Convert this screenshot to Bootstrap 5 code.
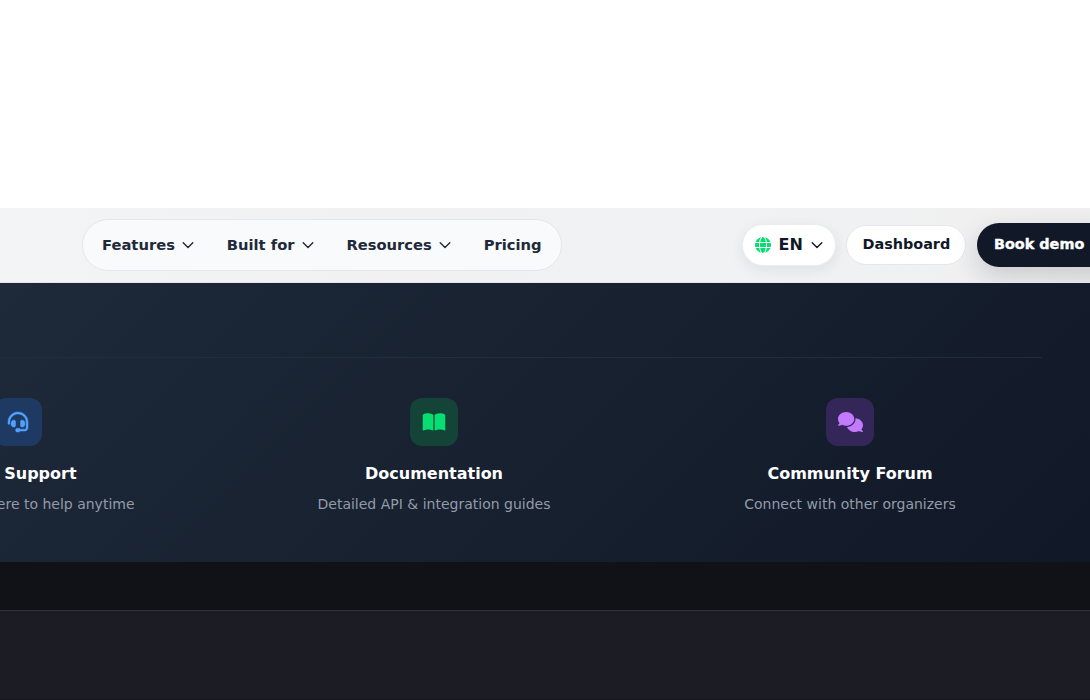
<!DOCTYPE html>
<html lang="en">
<head>
<meta charset="utf-8">
<meta name="viewport" content="width=device-width, initial-scale=1">
<title>Support resources</title>
<link href="https://cdn.jsdelivr.net/npm/bootstrap@5.3.0/dist/css/bootstrap.min.css" rel="stylesheet">
<style>
body{font-family:"DejaVu Sans",sans-serif;background:#fff;height:700px;overflow:hidden}
svg{display:block;flex:none}
.top-space{height:208px}
.site-bar{height:75px;background:linear-gradient(90deg,#f3f4f5,#f1f1f2 35%,#f1f2f4 65%,#efefef);border-bottom:1px solid #e5e7eb;padding-left:82px;overflow:hidden}
.menu-pill{width:480px;height:52px;background:#f9fafc;border:1px solid #e4e6ea;padding:0 19px;gap:32.6px}
.menu-pill a{font-size:14.72px;line-height:22px;font-weight:700;color:#1e2939;gap:7.3px}
.actions{margin-left:180px}
.lang{width:94px;height:42px;background:#fff;border:1px solid #ebedf0;padding:0 11.5px;gap:8px;color:#101828;font-weight:700;font-size:16px;box-shadow:0 4px 14px rgba(16,24,40,.08)}
.dash{width:120px;height:40px;background:#fff;border:1px solid #e5e7eb;margin-left:10px;padding:0 0 2px 15.5px;line-height:22px;color:#101828;font-weight:700;font-size:14.4px}
.demo{width:150px;height:44px;background:#111827;margin-left:11px;padding:0 0 2px 17px;line-height:22px;color:#fff;font-weight:700;font-size:14.4px;-webkit-text-stroke:.4px #fff;box-shadow:0 10px 26px rgba(16,24,40,.17)}
.help{height:279px;background:linear-gradient(135deg,#1e2939,#172130 50%,#111827);overflow:hidden}
.help-inner{width:1216px;margin-left:-174px;margin-top:74px;border-top:1px solid #222d3c;padding-top:40px;display:grid;grid-template-columns:repeat(3,384px);gap:32px}
.tile{width:48px;height:48px;border-radius:12px}
.tile-blue{background:#1f3a62;color:#51a2ff;padding-bottom:1px}
.tile-green{background:#144338;color:#05df72}
.tile-purple{background:#35265a;color:#c27aff}
.help h3{font-size:16px;line-height:24px;font-weight:700;color:#fff;margin:16px 0 8px}
.help p{font-size:14px;line-height:20px;color:#939ba9;margin:0}
.band{height:48px;background:#111118}
.base{height:90px;background:#1c1c24;border-top:1px solid #303037;border-bottom:1px solid #181120}
</style>
</head>
<body>
<div class="top-space"></div>
<header class="site-bar d-flex align-items-center">
  <nav class="menu-pill rounded-pill d-flex align-items-center flex-shrink-0">
    <a class="d-flex align-items-center text-decoration-none text-nowrap" href="#">Features <svg width="12" height="12" viewBox="0 0 12 12" fill="none" stroke="currentColor" stroke-width="1.4" stroke-linecap="round" stroke-linejoin="round"><path d="M1.2 3.8 6 8.6l4.8-4.8"/></svg></a>
    <a class="d-flex align-items-center text-decoration-none text-nowrap" href="#">Built for <svg width="12" height="12" viewBox="0 0 12 12" fill="none" stroke="currentColor" stroke-width="1.4" stroke-linecap="round" stroke-linejoin="round"><path d="M1.2 3.8 6 8.6l4.8-4.8"/></svg></a>
    <a class="d-flex align-items-center text-decoration-none text-nowrap" href="#">Resources <svg width="12" height="12" viewBox="0 0 12 12" fill="none" stroke="currentColor" stroke-width="1.4" stroke-linecap="round" stroke-linejoin="round"><path d="M1.2 3.8 6 8.6l4.8-4.8"/></svg></a>
    <a class="text-decoration-none text-nowrap" href="#">Pricing</a>
  </nav>
  <div class="actions d-flex align-items-center flex-shrink-0">
    <div class="lang rounded-pill d-flex align-items-center">
      <svg width="16" height="16" viewBox="0 0 512 512" fill="#05df72"><path d="M352 256c0 22.2-1.2 43.6-3.3 64H163.3c-2.2-20.4-3.3-41.8-3.3-64s1.2-43.6 3.3-64H348.7c2.2 20.4 3.3 41.8 3.3 64zm28.8-64H503.9c5.3 20.5 8.1 41.9 8.1 64s-2.8 43.5-8.1 64H380.8c2.1-20.6 3.2-42 3.2-64s-1.1-43.4-3.2-64zm112.6-32H376.7c-10-63.9-29.8-117.4-55.3-151.6c78.3 20.7 142 77.5 171.9 151.6zm-149.1 0H167.7c6.1-36.4 15.5-68.6 27-94.7c10.5-23.6 22.2-40.7 33.5-51.5C239.4 3.2 248.7 0 256 0s16.6 3.2 27.8 13.8c11.3 10.8 23 27.9 33.5 51.5c11.6 26 20.9 58.2 27 94.7zm-209 0H18.6C48.6 85.9 112.2 29.1 190.6 8.4C165.1 42.6 145.3 96.1 135.3 160zM8.1 192H131.2c-2.1 20.6-3.2 42-3.2 64s1.1 43.4 3.2 64H8.1C2.8 299.5 0 278.1 0 256s2.8-43.5 8.1-64zM194.7 446.6c-11.6-26-20.9-58.2-27-94.6H344.3c-6.1 36.4-15.5 68.6-27 94.6c-10.5 23.6-22.2 40.7-33.5 51.5C272.6 508.8 263.3 512 256 512s-16.6-3.2-27.8-13.8c-11.3-10.8-23-27.9-33.5-51.5zM135.3 352c10 63.9 29.8 117.4 55.3 151.6C112.2 482.9 48.6 426.1 18.6 352H135.3zm358.1 0c-30 74.1-93.6 130.9-171.9 151.6c25.5-34.2 45.2-87.7 55.3-151.6H493.4z"/></svg>
      <span>EN</span>
      <svg width="12" height="12" viewBox="0 0 12 12" fill="none" stroke="currentColor" stroke-width="1.4" stroke-linecap="round" stroke-linejoin="round"><path d="M1.2 3.8 6 8.6l4.8-4.8"/></svg>
    </div>
    <a class="dash rounded-pill d-flex align-items-center text-decoration-none" href="#">Dashboard</a>
    <a class="demo rounded-pill d-flex align-items-center text-decoration-none text-nowrap" href="#">Book demo</a>
  </div>
</header>
<section class="help">
  <div class="help-inner text-center">
    <div>
      <div class="tile tile-blue mx-auto d-flex align-items-center justify-content-center"><svg width="20" height="20" viewBox="0 0 512 512" fill="currentColor" stroke="currentColor" stroke-width="12" overflow="visible"><path d="M256 48C141.1 48 48 141.1 48 256v40c0 13.3-10.7 24-24 24s-24-10.7-24-24V256C0 114.6 114.6 0 256 0S512 114.6 512 256V400.1c0 48.6-39.4 88-88.1 88L313.6 488c-8.3 14.3-23.8 24-41.6 24H240c-26.5 0-48-21.5-48-48s21.5-48 48-48h32c17.8 0 33.3 9.7 41.6 24l110.4 .1c22.1 0 40-17.9 40-40V256c0-114.9-93.1-208-208-208zM144 208h16c17.7 0 32 14.3 32 32V352c0 17.7-14.3 32-32 32H144c-35.3 0-64-28.7-64-64V272c0-35.3 28.7-64 64-64zm224 0c35.3 0 64 28.7 64 64v48c0 35.3-28.7 64-64 64H352c-17.7 0-32-14.3-32-32V240c0-17.7 14.3-32 32-32h16z"/></svg></div>
      <h3>24/7 Support</h3>
      <p>Our team is here to help anytime</p>
    </div>
    <div>
      <div class="tile tile-green mx-auto d-flex align-items-center justify-content-center"><svg width="24" height="20" viewBox="0 0 576 512" fill="currentColor"><path d="M249.6 471.5c10.8 3.8 22.4-4.1 22.4-15.5V78.6c0-4.2-1.6-8.4-5-11C247.4 52 202.4 32 144 32C93.5 32 46.3 45.3 18.1 56.1C6.8 60.5 0 71.7 0 83.8V454.1c0 11.9 12.8 20.2 24.1 16.5C55.6 460.1 105.5 448 144 448c33.9 0 79 14 105.6 23.5zm76.8 0C353 462 398.1 448 432 448c38.5 0 88.4 12.1 119.9 22.6c11.3 3.8 24.1-4.6 24.1-16.5V83.8c0-12.1-6.8-23.3-18.1-27.6C529.7 45.3 482.5 32 432 32c-58.4 0-103.4 20-123 35.6c-3.3 2.6-5 6.8-5 11V456c0 11.4 11.7 19.3 22.4 15.5z"/></svg></div>
      <h3>Documentation</h3>
      <p>Detailed API &amp; integration guides</p>
    </div>
    <div>
      <div class="tile tile-purple mx-auto d-flex align-items-center justify-content-center"><svg width="25" height="20" viewBox="0 0 640 512" fill="currentColor"><path d="M208 352c114.9 0 208-78.8 208-176S322.9 0 208 0S0 78.8 0 176c0 38.6 14.7 74.3 39.6 103.4c-3.5 9.4-8.7 17.7-14.2 24.7c-4.8 6.2-9.7 11-13.3 14.3c-1.8 1.6-3.3 2.9-4.3 3.7c-.5 .4-.9 .7-1.1 .8l-.2 .2C1 327.2-1.4 334.4 .8 340.9S9.1 352 16 352c21.8 0 43.8-5.6 62.1-12.5c9.2-3.5 17.8-7.4 25.3-11.4C134.1 343.3 169.8 352 208 352zM448 176c0 112.3-99.1 196.9-216.5 207C255.8 457.4 336.4 512 432 512c38.2 0 73.9-8.7 104.7-23.9c7.5 4 16 7.9 25.2 11.4c18.3 6.9 40.3 12.5 62.1 12.5c6.9 0 13.1-4.5 15.2-11.1c2.1-6.6-.2-13.8-5.8-17.9l-.2-.2c-.2-.2-.6-.4-1.1-.8c-1-.8-2.5-2-4.3-3.7c-3.6-3.3-8.5-8.1-13.3-14.3c-5.5-7-10.7-15.4-14.2-24.7c24.9-29 39.6-64.7 39.6-103.4c0-92.8-84.9-168.9-192.6-175.5c.4 5.1 .6 10.3 .6 15.5z"/></svg></div>
      <h3>Community Forum</h3>
      <p>Connect with other organizers</p>
    </div>
  </div>
</section>
<div class="band"></div>
<footer class="base"></footer>
<script src="https://cdn.jsdelivr.net/npm/bootstrap@5.3.0/dist/js/bootstrap.bundle.min.js"></script>
</body>
</html>
